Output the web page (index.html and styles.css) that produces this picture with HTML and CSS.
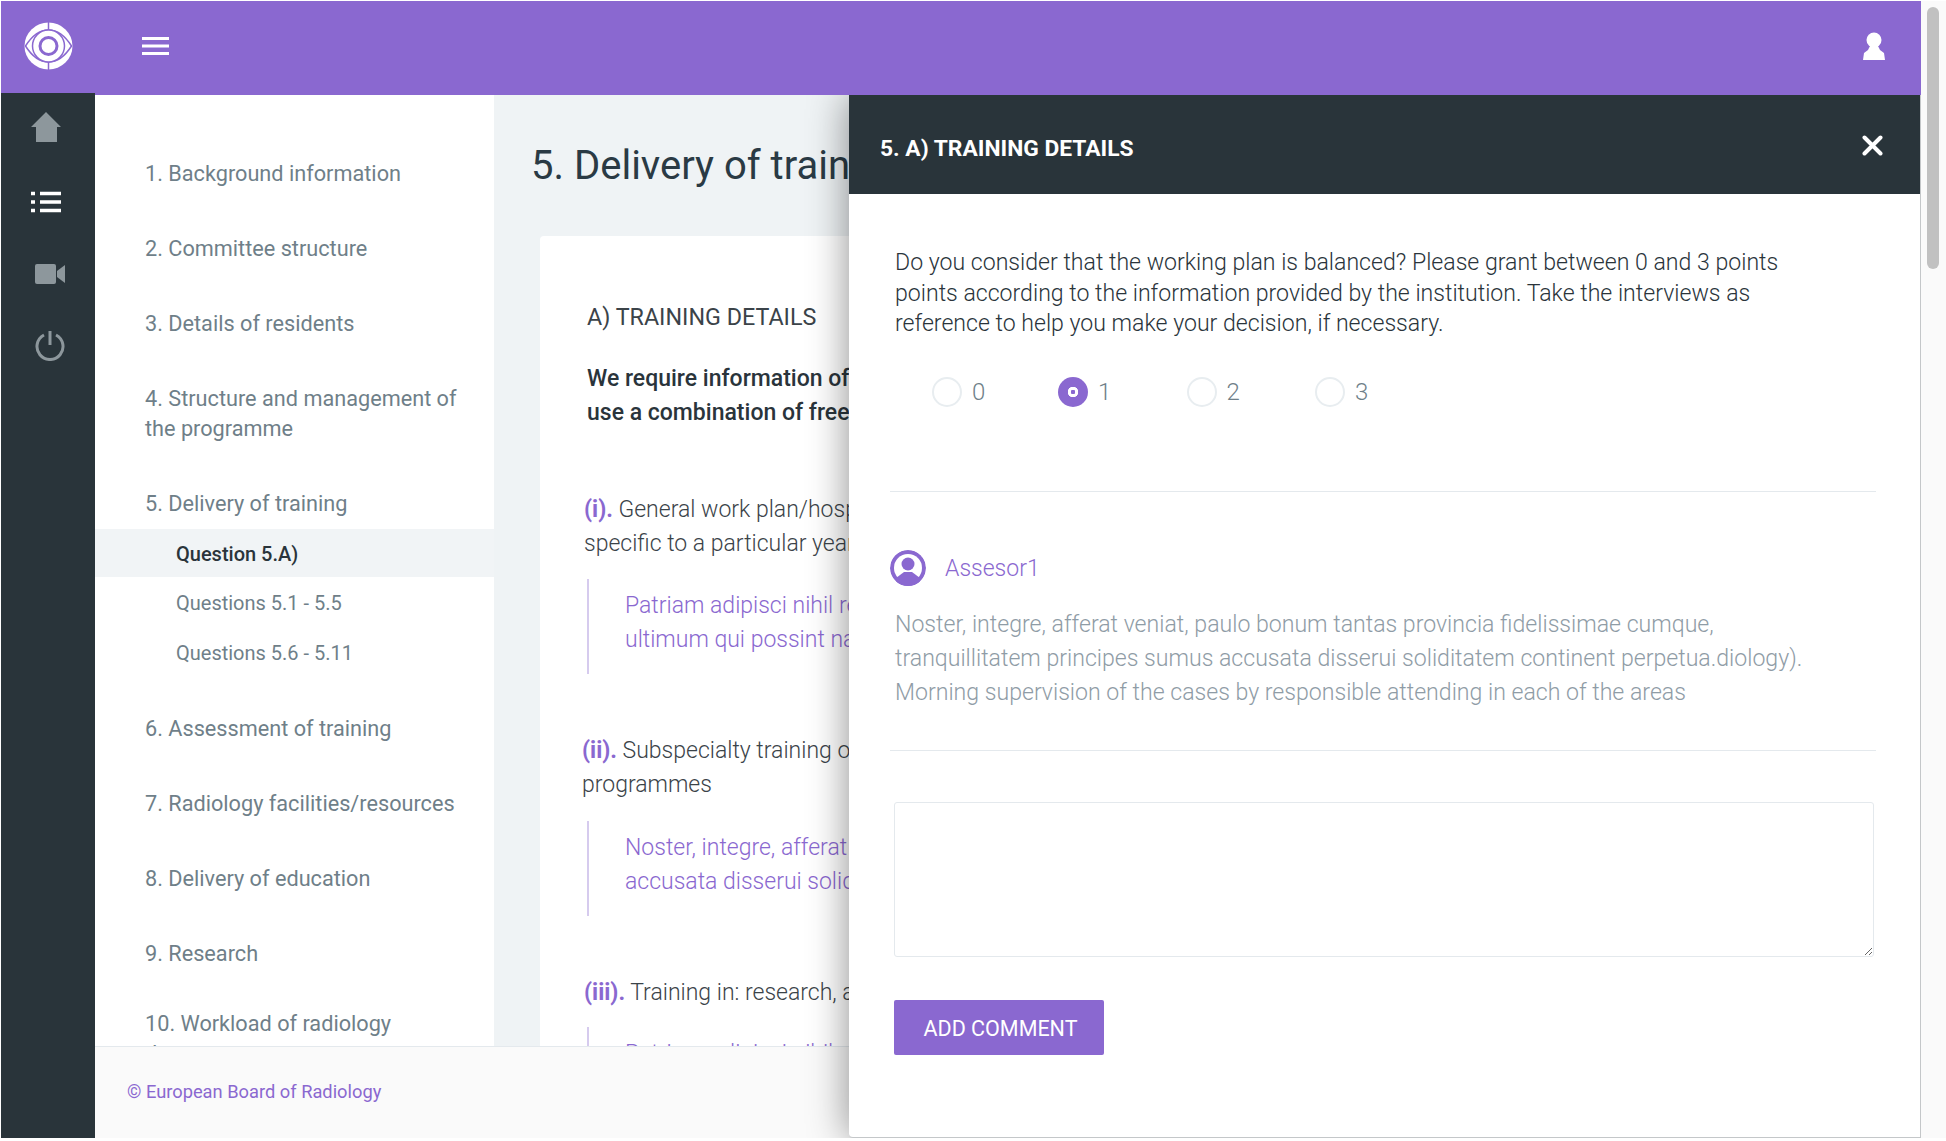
FILE: index.html
```html
<!DOCTYPE html>
<html lang="en">
<head>
  <meta charset="UTF-8">
  <title>Delivery of training</title>
  <link rel="stylesheet" href="styles.css">
</head>
<body>
  <div class="page">
    <div class="app">
      <header class="topbar">
        <svg class="logo" viewBox="0 0 48 48">
          <ellipse cx="24" cy="24" rx="24" ry="23.500" fill="#fff"/>
          <path d="M1 24C8 13 15 8 24 8s16 5 23 16c-7 11-14 16-23 16S8 35 1 24z" fill="none" stroke="#8a68d0" stroke-width="1.500"/>
          <circle cx="24" cy="24" r="16" fill="#fff" stroke="#8a68d0" stroke-width="1.500"/>
          <circle cx="24" cy="24" r="8.500" fill="#fff" stroke="#8a68d0" stroke-width="3"/>
          <path d="M24 0v8M24 40v8" stroke="#8a68d0" stroke-width="1.500"/>
        </svg>
        <svg class="burger" viewBox="0 0 27 18"><path d="M0 1.500h27M0 9h27M0 16.500h27" stroke="#fff" stroke-width="3"/></svg>
        <svg class="user" viewBox="0 0 22 28"><circle cx="11" cy="8" r="7.500" fill="#fff"/><path d="M7 14h8l2 4 4 3 1 7H0l1-7 4-3z" fill="#fff"/></svg>
      </header>
      <div class="body">
        <nav class="sidebar">
          <a class="side-link side-link-home">
            <svg class="side-icon" viewBox="0 0 30 30"><path d="M15 0l15 15h-4v15H5V15H0z" fill="#8d979c"/></svg>
          </a>
          <a class="side-link">
            <svg class="side-icon" viewBox="0 0 30 22"><path d="M9 2.500h21M9 11h21M9 19.500h21" stroke="#fff" stroke-width="3.400"/><path d="M0 2.500h4M0 11h4M0 19.500h4" stroke="#fff" stroke-width="3.400"/></svg>
          </a>
          <a class="side-link side-link-shift">
            <svg class="side-icon" viewBox="0 0 30 20"><rect width="21" height="20" rx="2" fill="#8d979c"/><path d="M22 7l8-6v18l-8-6z" fill="#8d979c"/></svg>
          </a>
          <a class="side-link side-link-shift">
            <svg class="side-icon" viewBox="0 0 30 30"><path d="M9 4a13 13 0 1 0 12 0" fill="none" stroke="#8d979c" stroke-width="3"/><path d="M15 0v14" stroke="#8d979c" stroke-width="3"/></svg>
          </a>
        </nav>
        <div class="content">
          <div class="columns">
            <ul class="menu">
              <li class="menu-item">1. Background information</li>
              <li class="menu-item">2. Committee structure</li>
              <li class="menu-item">3. Details of residents</li>
              <li class="menu-item">4. Structure and management of the programme</li>
              <li class="menu-item menu-open">5. Delivery of training</li>
              <li class="menu-sub menu-active">Question 5.A)</li>
              <li class="menu-sub">Questions 5.1 - 5.5</li>
              <li class="menu-sub menu-sub-last">Questions 5.6 - 5.11</li>
              <li class="menu-item">6. Assessment of training</li>
              <li class="menu-item">7. Radiology facilities/resources</li>
              <li class="menu-item">8. Delivery of education</li>
              <li class="menu-item menu-tight">9. Research</li>
              <li class="menu-item">10. Workload of radiology department</li>
            </ul>
            <main class="main">
              <h1 class="main-title">5. Delivery of training</h1>
              <section class="card">
                <h2 class="card-title">A) TRAINING DETAILS</h2>
                <p class="card-intro">We require information of<br>use a combination of free</p>
                <p class="question question-first"><b class="mark">(i).</b> General work plan/hospital<br>specific to a particular year</p>
                <blockquote class="answer">Patriam adipisci nihil reperiri<br>ultimum qui possint natura</blockquote>
                <p class="question question-shift"><b class="mark">(ii).</b> Subspecialty training of<br>programmes</p>
                <blockquote class="answer">Noster, integre, afferat veniat<br>accusata disserui soliditatem</blockquote>
                <p class="question question-last"><b class="mark">(iii).</b> Training in: research, and</p>
                <blockquote class="answer">Patriam adipisci nihil reperiri</blockquote>
              </section>
            </main>
          </div>
          <footer class="footer">© European Board of Radiology</footer>
        </div>
      </div>

      <!-- slide-in panel over the page -->
      <aside class="panel">
        <div class="panel-head">
          <h3 class="panel-title">5. A) TRAINING DETAILS</h3>
          <svg class="panel-close" viewBox="0 0 21 21"><path d="M2.500 2.500l16 16M18.500 2.500l-16 16" stroke="#fff" stroke-width="4" stroke-linecap="round"/></svg>
        </div>
        <div class="panel-body">
          <p class="panel-question">Do you consider that the working plan is balanced? Please grant between 0 and 3 points points according to the information provided by the institution. Take the interviews as reference to help you make your decision, if necessary.</p>
          <div class="radios">
            <label class="radio radio-first"><span class="radio-dot"></span>0</label>
            <label class="radio"><span class="radio-dot radio-on"></span>1</label>
            <label class="radio"><span class="radio-dot"></span>2</label>
            <label class="radio"><span class="radio-dot"></span>3</label>
          </div>
          <hr class="rule rule-first">
          <div class="assessor">
            <svg class="avatar" viewBox="0 0 36 36">
              <circle cx="18" cy="18" r="18" fill="#8a68d0"/>
              <circle cx="18" cy="18" r="14" fill="#fff"/>
              <circle cx="18" cy="14" r="6.500" fill="#8a68d0"/>
              <path d="M6 36v-8l8-6h8l8 6v8z" fill="#8a68d0"/>
            </svg>
            <span class="assessor-name">Assesor1</span>
          </div>
          <p class="comment">Noster, integre, afferat veniat, paulo bonum tantas provincia fidelissimae cumque, tranquillitatem principes sumus accusata disserui soliditatem continent perpetua.diology). Morning supervision of the cases by responsible attending in each of the areas</p>
          <hr class="rule rule-second">
          <textarea class="comment-box"></textarea>
          <button class="add-btn">ADD COMMENT</button>
        </div>
      </aside>
    </div>
    <div class="scrollbar"><div class="scroll-thumb"></div></div>
  </div>
</body>
</html>
```

FILE: styles.css
```css
*{
  box-sizing: border-box;
}
body{
  margin: 0;
  background: #fff;
  font-family: Roboto, "Liberation Sans", sans-serif;
  overflow: hidden;
}
.page{
  display: flex;
  height: 1141px;
  padding: 1px 0 3px 1px;
}

.app{
  position: relative;
  width: 1920px;
  display: flex;
  flex-direction: column;
  overflow: hidden;
}
.topbar{
  position: relative;
  z-index: 3;
  height: 94px;
  flex: none;
  background: #8a68d0;
  display: flex;
  align-items: center;
  padding-bottom: 4px;
}
.logo{
  width: 49px;
  height: 48px;
  margin-left: 23px;
}
.burger{
  width: 27px;
  height: 18px;
  margin-left: 69px;
}
.user{
  width: 22px;
  height: 28px;
  margin-left: auto;
  margin-right: 36px;
}

.body{
  flex: 1;
  display: flex;
  min-height: 0;
}
.sidebar{
  position: relative;
  z-index: 4;
  width: 94px;
  flex: none;
  margin-top: -2px;
  padding-top: 2px;
  background: #29343a;
}
.side-link{
  display: flex;
  align-items: center;
  height: 64px;
  margin-bottom: 8px;
  padding-left: 30px;
}
.side-link-home{
  margin-bottom: 11px;
}
.side-link-shift{
  padding-left: 34px;
}
.side-icon{
  width: 30px;
}

.content{
  flex: 1;
  min-width: 0;
  display: flex;
  flex-direction: column;
}
.columns{
  flex: 1;
  min-height: 0;
  display: flex;
  overflow: hidden;
}
.menu{
  width: 399px;
  flex: none;
  margin: 0;
  padding: 64px 0 0;
  list-style: none;
  background: #fff;
  font-size: 21.700px;
  line-height: 30px;
  color: #6f7f89;
}
.menu-item{
  padding: 0 20px 0 50px;
  margin-bottom: 45px;
}
.menu-open{
  margin-bottom: 10px;
}
.menu-tight{
  margin-bottom: 40px;
}
.menu-sub{
  height: 50px;
  line-height: 48px;
  padding-left: 81px;
  font-size: 20px;
}
.menu-sub-last{
  height: 60px;
  margin-bottom: 25px;
}
.menu-active{
  background: #f1f4f6;
  color: #2a343b;
  font-weight: 500;
  height: 48px;
  line-height: 50px;
  margin-bottom: 2px;
}

.main{
  flex: 1;
  background: #eff3f5;
  padding: 47px 0 0 37px;
  overflow: hidden;
}
.main-title{
  margin: 0 0 46px;
  font-size: 40px;
  line-height: 48px;
  font-weight: 400;
  color: #2a3a44;
  white-space: nowrap;
}
.card{
  margin-left: 9px;
  padding: 64px 0 0 47px;
  background: #fff;
  border-radius: 4px;
  color: #3b4349;
  font-size: 23px;
  font-weight: 300;
  line-height: 34px;
  white-space: nowrap;
}
.card-title{
  margin: 0 0 28px;
  font-size: 23.300px;
  line-height: 34px;
  font-weight: 400;
}
.card-intro{
  margin: 0 0 63px;
  font-weight: 500;
  color: #2a343b;
}
.question{
  margin: 60px 0 19px -3px;
}
.question-first{
  margin-top: 0;
  margin-bottom: 18px;
}
.question-shift{
  margin-left: -5px;
}
.question-last{
  margin-bottom: 17px;
}
.mark{
  color: #8a68d0;
  font-weight: 700;
}
.answer{
  margin: 0;
  padding: 10px 0 17px 36px;
  border-left: 2px solid #d6cbee;
  color: #8a68d0;
}

.footer{
  height: 92px;
  flex: none;
  background: #fafafa;
  border-top: 1px solid #e4e9ed;
  padding: 33px 0 0 32px;
  font-size: 18.300px;
  line-height: 24px;
  color: #8a68d0;
}

.panel{
  position: absolute;
  z-index: 2;
  left: 848px;
  top: 94px;
  right: 0;
  bottom: 0;
  background: #fff;
  border-radius: 0 0 0 4px;
  box-shadow: 0 0 40px rgba(0,0,0,.45);
  border-right: 1px solid #c4c7c9;
  border-bottom: 1px solid #c4c7c9;
}
.panel-head{
  height: 99px;
  background: #29343a;
  display: flex;
  align-items: center;
  justify-content: space-between;
  padding: 0 37px 0 31px;
}
.panel-title{
  margin: 8px 0 0;
  color: #fff;
  font-size: 22.800px;
  font-weight: 700;
}
.panel-close{
  width: 21px;
  height: 21px;
  margin-top: 2px;
}
.panel-body{
  padding: 54px 44px 0 46px;
}
.panel-question{
  margin: 0;
  max-width: 930px;
  font-size: 23.100px;
  line-height: 30.500px;
  font-weight: 300;
  color: #2a343b;
}
.radios{
  display: flex;
  margin: 37px 0 0 37px;
}
.radio{
  width: 128.500px;
  display: flex;
  align-items: center;
  gap: 10px;
  font-size: 24px;
  font-weight: 300;
  color: #6f7f89;
}
.radio-first{
  width: 126px;
}
.radio-dot{
  width: 30px;
  height: 30px;
  flex: none;
  border: 2px solid #e8edf0;
  border-radius: 50%;
  background: #fff;
}
.radio-on{
  border: 0;
  background: radial-gradient(circle at center, #8a68d0 0 2px, #fff 2.500px 5px, #8a68d0 5.500px);
}
.rule{
  border: 0;
  border-top: 1px solid #e4e9ed;
  margin-left: -5px;
  margin-right: 0;
}
.rule-first{
  margin-top: 84px;
  margin-bottom: 0;
}
.assessor{
  display: flex;
  align-items: center;
  margin: 58px 0 0 -5px;
}
.avatar{
  width: 36px;
  height: 36px;
  border-radius: 50%;
}
.assessor-name{
  margin: 2px 0 0 19px;
  font-size: 23px;
  font-weight: 300;
  color: #8a68d0;
}
.comment{
  margin: 22px 0 0;
  max-width: 930px;
  font-size: 23.100px;
  line-height: 34px;
  font-weight: 300;
  color: #8f9ca6;
}
.rule-second{
  margin-top: 40px;
  margin-bottom: 0;
}
.comment-box{
  display: block;
  width: 980px;
  height: 155px;
  margin-top: 51px;
  margin-left: -1px;
  border: 1px solid #e4e9ed;
  border-radius: 3px;
  background: #fff;
}
.add-btn{
  display: block;
  width: 210px;
  height: 55px;
  margin: 43px 0 0 -1px;
  padding: 2px 0 0 3px;
  border: 0;
  border-radius: 2px;
  background: #8a68d0;
  color: #fff;
  font-family: inherit;
  font-size: 21.500px;
}

.scrollbar{
  flex: 1;
  background: #fafafa;
  padding: 6px 7px 0 6px;
}
.scroll-thumb{
  height: 262px;
  background: #c1c1c1;
  border-radius: 6px;
}
```
